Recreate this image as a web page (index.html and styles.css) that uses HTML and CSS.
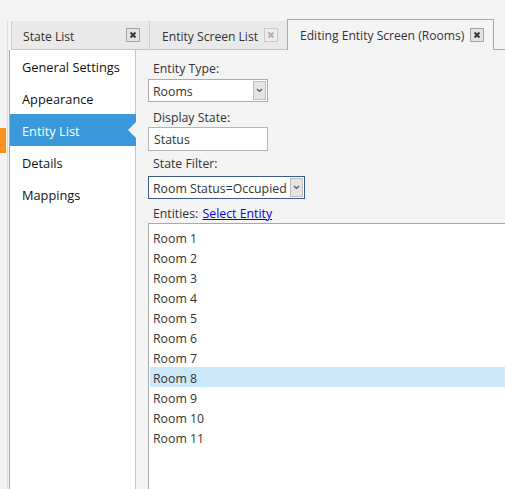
FILE: index.html
```html
<!DOCTYPE html>
<html lang="en">
<head>
<meta charset="utf-8">
<title>Editing Entity Screen (Rooms)</title>
<link rel="stylesheet" href="styles.css">
</head>
<body>
<div class="page">
  <div class="gutter"><div class="marker"></div></div>
  <div class="frame">
    <div class="tabs">
      <div class="tab tab-1">
        <span class="tab-title">State List</span>
        <span class="close"><svg width="12" height="12" viewBox="0 0 12 12"><path d="M3.5 3.5 L8.5 8.5 M8.5 3.5 L3.5 8.5" /></svg></span>
      </div>
      <div class="tab tab-2">
        <span class="tab-title">Entity Screen List</span>
        <span class="close dim"><svg width="12" height="12" viewBox="0 0 12 12"><path d="M3.5 3.5 L8.5 8.5 M8.5 3.5 L3.5 8.5" /></svg></span>
      </div>
      <div class="tab tab-3 active">
        <span class="tab-title">Editing Entity Screen (Rooms)</span>
        <span class="close"><svg width="12" height="12" viewBox="0 0 12 12"><path d="M3.5 3.5 L8.5 8.5 M8.5 3.5 L3.5 8.5" /></svg></span>
      </div>
      <div class="tab-fill"></div>
    </div>
    <div class="main">
      <nav class="nav">
        <div class="nav-item">General Settings</div>
        <div class="nav-item">Appearance</div>
        <div class="nav-item selected">Entity List</div>
        <div class="nav-item">Details</div>
        <div class="nav-item">Mappings</div>
      </nav>
      <div class="content">
        <div class="label label-1">Entity Type:</div>
        <div class="select select-1">
          <span class="value">Rooms</span>
          <span class="drop"><svg width="7" height="5" viewBox="0 0 7 5"><path d="M1 1 L3.5 3.5 L6 1" /></svg></span>
        </div>
        <div class="label label-2">Display State:</div>
        <div class="input">Status</div>
        <div class="label label-3">State Filter:</div>
        <div class="select select-2 focused">
          <span class="value">Room Status=Occupied</span>
          <span class="drop"><svg width="7" height="5" viewBox="0 0 7 5"><path d="M1 1 L3.5 3.5 L6 1" /></svg></span>
        </div>
        <div class="label label-4">Entities: <a class="link" href="#">Select Entity</a></div>
        <div class="list">
          <div class="list-item">Room 1</div>
          <div class="list-item">Room 2</div>
          <div class="list-item">Room 3</div>
          <div class="list-item">Room 4</div>
          <div class="list-item">Room 5</div>
          <div class="list-item">Room 6</div>
          <div class="list-item">Room 7</div>
          <div class="list-item selected">Room 8</div>
          <div class="list-item">Room 9</div>
          <div class="list-item">Room 10</div>
          <div class="list-item">Room 11</div>
        </div>
      </div>
    </div>
  </div>
</div>
</body>
</html>
```
FILE: styles.css
```css
html, body {
  margin: 0;
  padding: 0;
}
body {
  background: #f4f4f4;
  font-family: "Open Sans", "Noto Sans", sans-serif;
  font-size: 12.3px;
  color: #333;
}
.page {
  display: flex;
  height: 489px;
  overflow: hidden;
}
.gutter {
  width: 7px;
  flex: none;
}
.marker {
  margin-top: 128px;
  width: 6px;
  height: 25px;
  background: #f7931e;
}
.frame {
  flex: 1;
  min-width: 0;
  margin-top: 21px;
  border-left: 1px solid #dcdcdc;
  display: flex;
  flex-direction: column;
}
.tabs {
  height: 29px;
  flex: none;
  display: flex;
  align-items: flex-end;
  padding-left: 3px;
}
.tab {
  box-sizing: border-box;
  height: 29px;
  flex: none;
  display: flex;
  align-items: center;
  justify-content: space-between;
  padding: 0 9px 0 11px;
  background: #e9e9e9;
  border-left: 1px solid #d0d0d0;
  border-bottom: 1px solid #c4c4c4;
  color: #333;
  font-size: 12.1px;
}
.tab-title {
  padding-top: 2px;
  white-space: nowrap;
}
.tab-1 { width: 138px; }
.tab-2 { width: 138px; padding-left: 12px; }
.tab-3 { width: 207px; padding-left: 12px; }
.tab.active {
  height: 31px;
  background: #f4f4f4;
  border: 1px solid #a9a9a9;
  border-bottom: none;
  padding-bottom: 1px;
}
.tab-fill {
  flex: 1;
  height: 29px;
  box-sizing: border-box;
  border-bottom: 1px solid #a9a9a9;
}
.close {
  box-sizing: border-box;
  width: 14px;
  height: 14px;
  border: 1px solid #a3a3a3;
  background: #e2e2e2;
  display: flex;
  align-items: center;
  justify-content: center;
}
.close svg path {
  stroke: #333;
  stroke-width: 1.8;
  fill: none;
}
.close.dim {
  border-color: #c9c9c9;
  background: #ececec;
}
.close.dim svg path {
  stroke: #b0b0b0;
}
.main {
  flex: 1;
  display: flex;
  min-height: 0;
}
.nav {
  flex: none;
  width: 125px;
  margin-left: 1px;
  background: #fff;
  border-left: 1px solid #a6a6a6;
  border-right: 1px solid #c6c6c6;
}
.nav-item {
  box-sizing: border-box;
  height: 32px;
  padding: 3px 0 0 12px;
  line-height: 29px;
  font-size: 12.8px;
  color: #111;
  white-space: nowrap;
}
.nav-item.selected {
  position: relative;
  margin-right: -1px;
  background: #3a98db;
  color: #fff;
}
.nav-item.selected::after {
  content: "";
  position: absolute;
  right: 0;
  top: 8px;
  border-style: solid;
  border-width: 8px 8px 8px 0;
  border-color: transparent #f4f4f4 transparent transparent;
}
.content {
  flex: 1;
  min-width: 0;
  display: flex;
  flex-direction: column;
  align-items: flex-start;
  padding: 9px 0 0 12px;
}
.label {
  padding: 2px 0 0 5px;
  line-height: 16px;
  color: #333;
  white-space: nowrap;
}
.label-2 { margin-top: 6px; }
.label-3 { margin-top: 3px; }
.label-4 { margin-top: 5px; }
.link {
  color: #0000ee;
  text-decoration: underline;
  margin-left: 1px;
}
.select {
  box-sizing: border-box;
  height: 23px;
  display: flex;
  align-items: stretch;
  background: #fff;
  border: 1px solid #ababab;
}
.select-1 {
  width: 120px;
  margin-top: 2px;
}
.select-2 {
  width: 157px;
  margin-top: 4px;
}
.select.focused {
  border-color: #3b5b8c;
}
.value {
  flex: 1;
  padding: 2px 0 0 4px;
  line-height: 19px;
  white-space: nowrap;
  overflow: hidden;
}
.drop {
  width: 11px;
  margin: 1px;
  background: #e4e4e4;
  border: 1px solid #bdbdbd;
  display: flex;
  align-items: center;
  justify-content: center;
}
.drop svg path {
  stroke: #555;
  stroke-width: 1.2;
  fill: none;
}
.input {
  box-sizing: border-box;
  width: 120px;
  height: 24px;
  margin-top: 1px;
  padding: 2px 0 0 5px;
  line-height: 20px;
  background: #fff;
  border: 1px solid #b4b4b4;
}
.list {
  align-self: stretch;
  flex: 1;
  margin-top: 1px;
  padding: 3px 0 0 1px;
  background: #fff;
  border-top: 1px solid #a9a9a9;
  border-left: 1px solid #a9a9a9;
}
.list-item {
  box-sizing: border-box;
  height: 20px;
  padding: 3px 0 0 3px;
  line-height: 17px;
  color: #333;
}
.list-item.selected {
  background: #cce8fb;
}
```
